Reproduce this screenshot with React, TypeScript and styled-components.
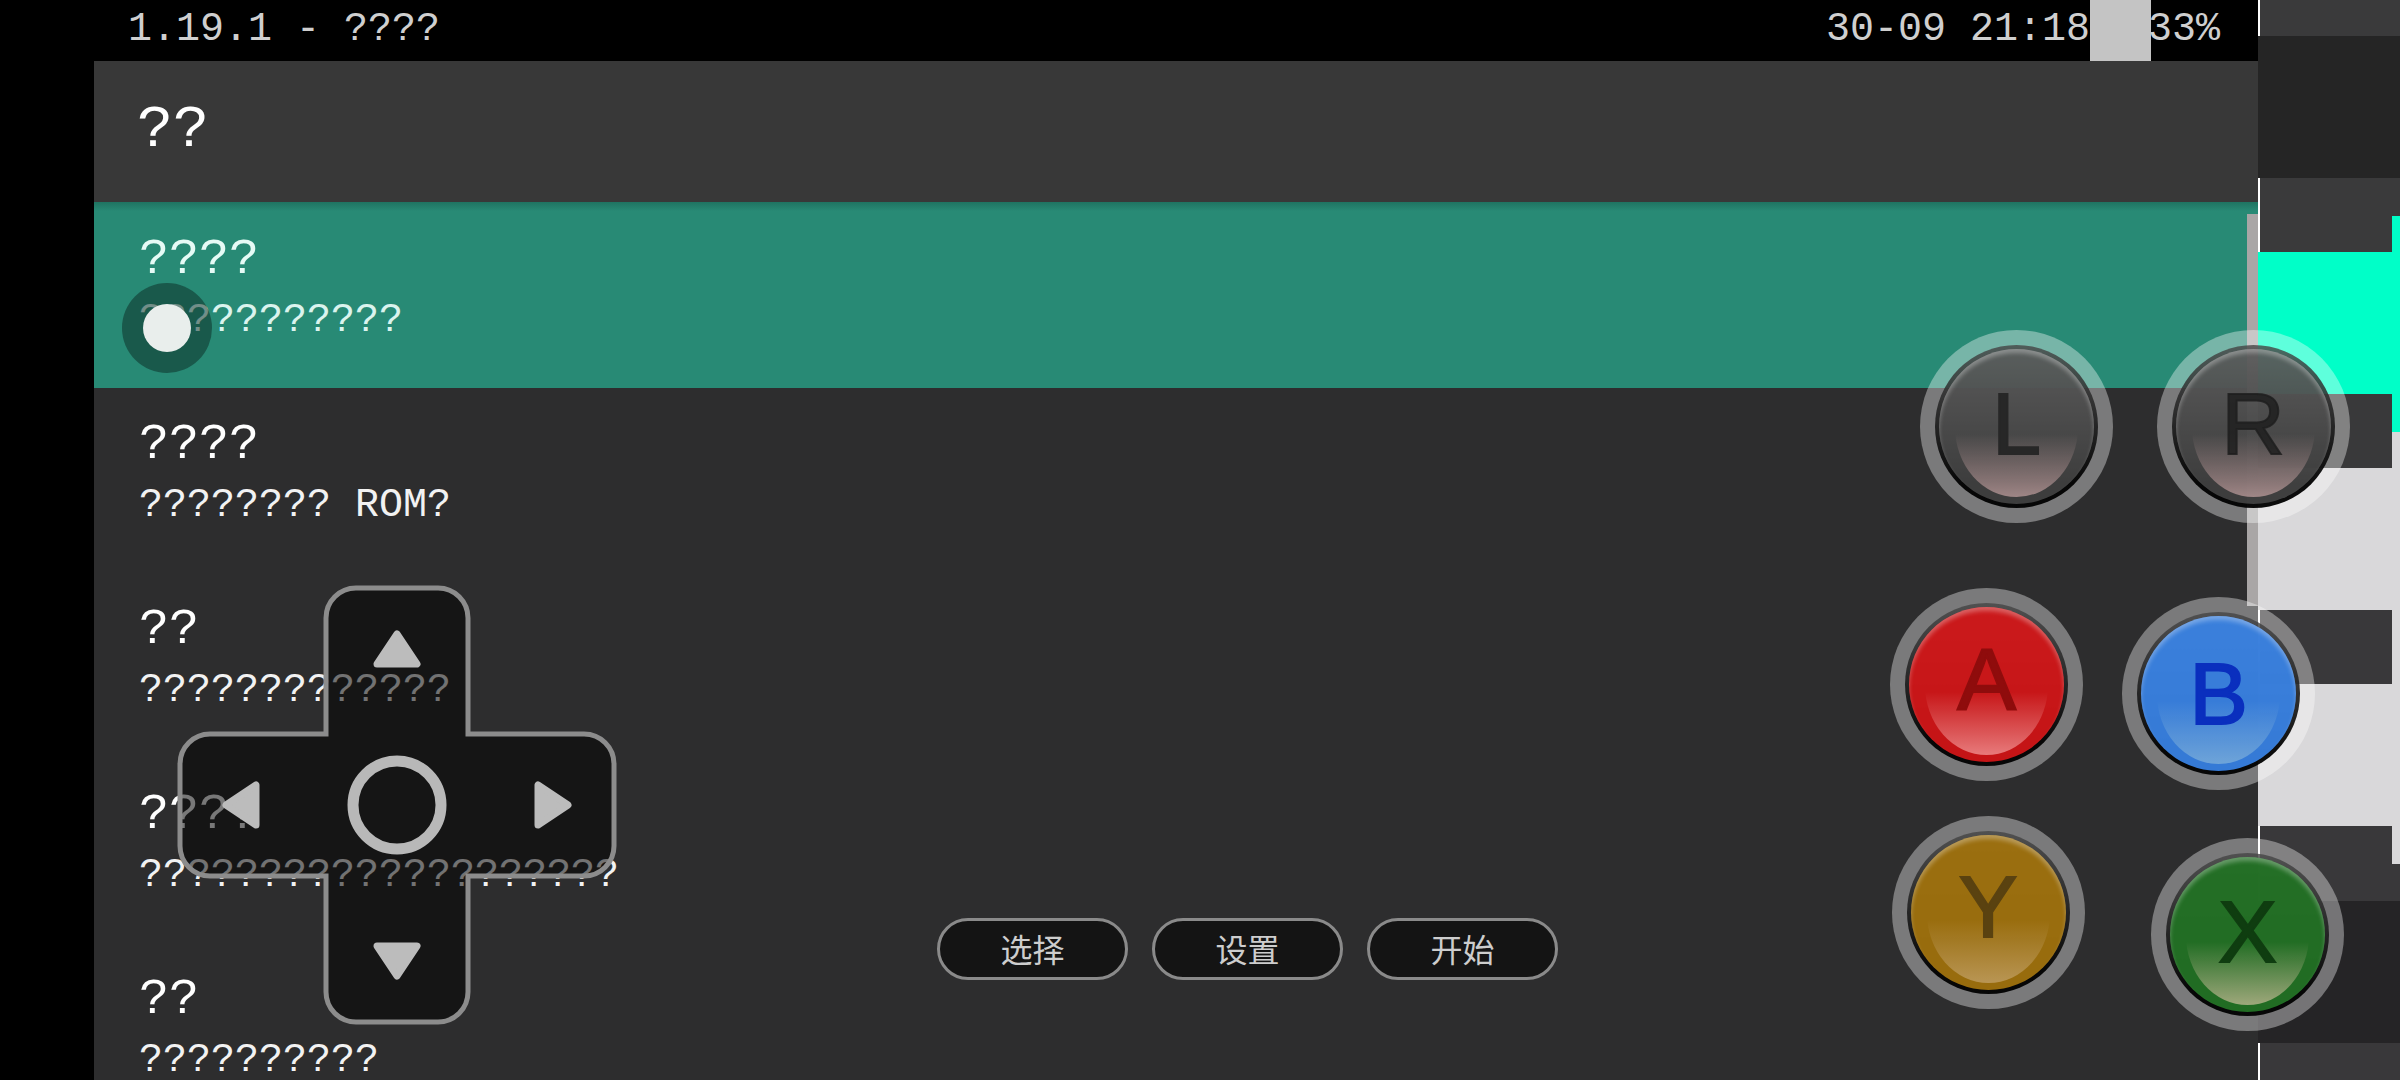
import styled, { createGlobalStyle } from 'styled-components'

const GlobalStyle = createGlobalStyle`
  html, body {
    margin: 0;
    padding: 0;
    background: #000;
    overflow: hidden;
  }
`

const Screen = styled.div`
  position: relative;
  display: flex;
  width: 2400px;
  height: 1080px;
  overflow: hidden;
  background: #000;
  font-family: "Liberation Mono", "DejaVu Sans Mono", monospace;
`

const Gutter = styled.div`
  flex: 0 0 94px;
`

const Main = styled.div`
  flex: 0 0 2164px;
  display: flex;
  flex-direction: column;
  overflow: hidden;
`

const StatusBar = styled.div`
  flex: 0 0 61px;
  display: flex;
  justify-content: space-between;
  padding: 0 38px 0 34px;
  font-size: 40px;
  line-height: 60px;
  color: #cfcfcf;
  white-space: pre;
`

const StatusRight = styled.div`
  display: flex;
`

const SignalBlock = styled.div`
  width: 61px;
  height: 61px;
  margin-right: -3px;
  background: #c4c4c4;
`

const Header = styled.div`
  flex: 0 0 141px;
  padding-left: 43px;
  background: #383838;
  color: #fff;
  font-size: 60px;
  line-height: 138px;
`

const List = styled.div`
  flex: 1;
  background: #2d2d2e;
`

const Row = styled.div<{ $active?: boolean }>`
  height: ${p => (p.$active ? 186 : 185)}px;
  box-sizing: border-box;
  padding: ${p => (p.$active ? 30 : 29)}px 0 0 45px;
  background: ${p => (p.$active ? 'linear-gradient(#1f7361, #288a75 9px)' : 'transparent')};
  color: ${p => (p.$active ? '#e6fbf6' : '#fff')};
`

const RowTitle = styled.div`
  font-size: 50px;
  line-height: 56px;
`

const RowSub = styled.div`
  margin-top: 15px;
  font-size: 40px;
  line-height: 36px;
  opacity: 0.94;
`

const Strip = styled.div`
  flex: 0 0 142px;
  display: flex;
  flex-direction: column;
`

const Band = styled.div<{ $h: number; $bg: string; $edge?: string; $line?: string }>`
  flex: 0 0 ${p => p.$h}px;
  box-sizing: border-box;
  background: ${p => p.$bg};
  border-left: 2px solid ${p => p.$line || p.$bg};
  border-right: 8px solid ${p => p.$edge || p.$bg};
`

const Scrollbar = styled.div`
  position: absolute;
  left: 2247px;
  top: 214px;
  width: 11px;
  height: 392px;
  background: #a9a6a6;
`

const Touch = styled.div`
  position: absolute;
  left: 122px;
  top: 283px;
  width: 90px;
  height: 90px;
  display: flex;
  align-items: center;
  justify-content: center;
  border-radius: 50%;
  background: rgba(10, 40, 33, 0.5);
`

const TouchDot = styled.div`
  width: 48px;
  height: 48px;
  border-radius: 50%;
  background: #e9eeec;
`

const Dpad = styled.svg`
  position: absolute;
  left: 177px;
  top: 585px;
  width: 440px;
  height: 440px;
`

const Pills = styled.div`
  position: absolute;
  left: 937px;
  top: 918px;
  display: flex;
  gap: 24px;
`

const Pill = styled.div`
  width: 191px;
  height: 62px;
  box-sizing: border-box;
  border: 3px solid #8a8a8a;
  border-radius: 31px;
  background: rgba(0, 0, 0, 0.55);
  color: #cdcdcd;
  font-family: "Noto Sans CJK SC", sans-serif;
  font-size: 32px;
  line-height: 54px;
  text-align: center;
`

const PadRing = styled.div<{ $x: number; $y: number }>`
  position: absolute;
  left: ${p => p.$x - 96.5}px;
  top: ${p => p.$y - 96.5}px;
  width: 193px;
  height: 193px;
  box-sizing: border-box;
  padding: 15px;
  border-radius: 50%;
  background: rgba(255, 255, 255, 0.37);
`

const PadWell = styled.div`
  width: 100%;
  height: 100%;
  box-sizing: border-box;
  padding: 4px;
  border-radius: 50%;
  background: linear-gradient(rgba(70, 70, 70, 0.8), rgba(0, 0, 0, 0.95) 85%);
`

const PadFace = styled.div<{ $color: string; $ink: string; $lift: number; $glow: string }>`
  position: relative;
  width: 100%;
  height: 100%;
  display: flex;
  align-items: center;
  justify-content: center;
  overflow: hidden;
  border-radius: 50%;
  background: ${p => p.$color};
  box-shadow: inset 0 4px 4px rgba(255, 255, 255, 0.3);
  color: ${p => p.$ink};
  font-family: "Liberation Sans", Arial, sans-serif;
  font-size: 88px;
  line-height: 1;
  -webkit-text-stroke: 2px ${p => p.$ink};

  &::after {
    content: '';
    position: absolute;
    left: 16px;
    right: 16px;
    top: 8px;
    bottom: 7px;
    border-radius: 50%;
    background: linear-gradient(transparent 55%, ${p => p.$glow} 100%);
  }

  span {
    position: relative;
    z-index: 1;
    transform: translateY(${p => p.$lift}px);
  }
`

const bands = [
  { h: 36, bg: '#3a3a3b', line: '#fff' },
  { h: 142, bg: '#252525' },
  { h: 38, bg: '#3a3a3b', line: '#fff' },
  { h: 36, bg: '#3a3a3b', edge: '#00ffc8', line: '#fff' },
  { h: 142, bg: '#00ffc8' },
  { h: 38, bg: '#39393a', edge: '#00ffc8', line: '#48484a' },
  { h: 36, bg: '#39393a', edge: '#d9d8da', line: '#48484a' },
  { h: 142, bg: '#d9d8da' },
  { h: 74, bg: '#39383a', edge: '#d9d8da', line: '#fff' },
  { h: 142, bg: '#d9d8da' },
  { h: 38, bg: '#39383a', edge: '#d9d8da', line: '#fff' },
  { h: 37, bg: '#39383a', line: '#fff' },
  { h: 142, bg: '#252426' },
  { h: 37, bg: '#39383a', line: '#fff' },
]

const rows = [
  { title: '????', sub: '???????????', active: true },
  { title: '????', sub: '???????? ROM?' },
  { title: '??', sub: '?????????????' },
  { title: '????', sub: '????????????????????' },
  { title: '??', sub: '??????????' },
]

const grayFace = 'rgba(98, 98, 98, 0.6)'

const padButtons = [
  { label: 'L', x: 2016.5, y: 426.5, color: grayFace, ink: '#272727', lift: -3, glow: 'rgba(255, 205, 205, 0.5)' },
  { label: 'R', x: 2253, y: 426.5, color: grayFace, ink: 'rgba(30, 30, 30, 0.85)', lift: -3, glow: 'rgba(255, 205, 205, 0.5)' },
  { label: 'A', x: 1986.5, y: 684, color: 'rgba(214, 22, 24, 0.92)', ink: '#8f0c0c', lift: -4, glow: 'rgba(255, 190, 190, 0.6)' },
  { label: 'B', x: 2218.5, y: 693, color: 'rgba(58, 132, 232, 0.92)', ink: '#0a2fbe', lift: 1, glow: 'rgba(180, 215, 220, 0.45)' },
  { label: 'Y', x: 1988, y: 912, color: 'rgba(158, 112, 14, 0.96)', ink: '#5a4210', lift: -5, glow: 'rgba(225, 200, 170, 0.45)' },
  { label: 'X', x: 2247.5, y: 934.5, color: 'rgba(34, 112, 36, 0.96)', ink: '#0f3d10', lift: -3, glow: 'rgba(225, 200, 170, 0.65)' },
]

const crossPath =
  'M149 33 A30 30 0 0 1 179 3 H261 A30 30 0 0 1 291 33 V149 H407 A30 30 0 0 1 437 179 V261 ' +
  'A30 30 0 0 1 407 291 H291 V407 A30 30 0 0 1 261 437 H179 A30 30 0 0 1 149 407 V291 H33 ' +
  'A30 30 0 0 1 3 261 V179 A30 30 0 0 1 33 149 H149 Z'

export default function App() {
  return (
    <>
      <GlobalStyle />
      <Screen>
        <Gutter />
        <Main>
          <StatusBar>
            <div>1.19.1 - ????</div>
            <StatusRight>
              <div>30-09 21:18</div>
              <SignalBlock />
              <div>33%</div>
            </StatusRight>
          </StatusBar>
          <Header>??</Header>
          <List>
            {rows.map((row, i) => (
              <Row key={i} $active={row.active}>
                <RowTitle>{row.title}</RowTitle>
                <RowSub>{row.sub}</RowSub>
              </Row>
            ))}
          </List>
        </Main>
        <Strip>
          {bands.map((band, i) => (
            <Band key={i} $h={band.h} $bg={band.bg} $edge={band.edge} $line={band.line} />
          ))}
        </Strip>

        <Scrollbar />

        <Touch>
          <TouchDot />
        </Touch>

        <Dpad viewBox="0 0 440 440">
          <path d={crossPath} fill="rgba(0,0,0,0.53)" stroke="#8c8c8c" strokeWidth="5" />
          <g fill="#bcbcbc" stroke="#bcbcbc" strokeWidth="7" strokeLinejoin="round">
            <polygon points="220,49 240,79 200,79" />
            <polygon points="220,391 240,361 200,361" />
            <polygon points="49,220 79,200 79,240" />
            <polygon points="391,220 361,200 361,240" />
          </g>
          <circle cx="220" cy="220" r="44" fill="none" stroke="#b8b8b8" strokeWidth="11" />
        </Dpad>

        <Pills>
          <Pill>选择</Pill>
          <Pill>设置</Pill>
          <Pill>开始</Pill>
        </Pills>

        {padButtons.map(b => (
          <PadRing key={b.label} $x={b.x} $y={b.y}>
            <PadWell>
              <PadFace $color={b.color} $ink={b.ink} $lift={b.lift} $glow={b.glow}>
                <span>{b.label}</span>
              </PadFace>
            </PadWell>
          </PadRing>
        ))}
      </Screen>
    </>
  )
}
